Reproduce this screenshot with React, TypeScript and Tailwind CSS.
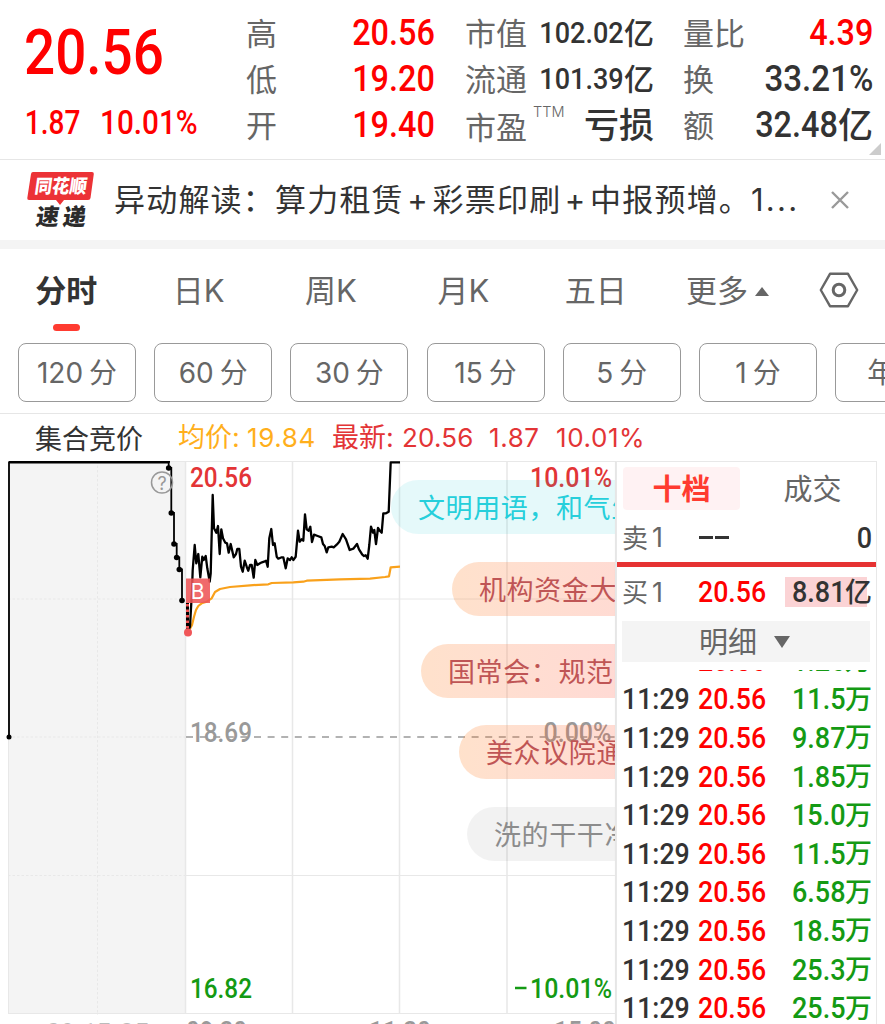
import React from 'react';
import clsx from 'clsx';

type Point = [number, number];

const TABS = ['分时', '日K', '周K', '月K', '五日'];

const PERIODS = [
  { count: '120', unit: '分' },
  { count: '60', unit: '分' },
  { count: '30', unit: '分' },
  { count: '15', unit: '分' },
  { count: '5', unit: '分' },
  { count: '1', unit: '分' },
];

const TRADES = [
  { time: '', price: '20.56', volume: '1.26' },
  { time: '11:29', price: '20.56', volume: '11.5' },
  { time: '11:29', price: '20.56', volume: '9.87' },
  { time: '11:29', price: '20.56', volume: '1.85' },
  { time: '11:29', price: '20.56', volume: '15.0' },
  { time: '11:29', price: '20.56', volume: '11.5' },
  { time: '11:29', price: '20.56', volume: '6.58' },
  { time: '11:29', price: '20.56', volume: '18.5' },
  { time: '11:29', price: '20.56', volume: '25.3' },
  { time: '11:29', price: '20.56', volume: '25.5' },
];

const HOT = 'bg-linear-to-r from-[#ff7814]/22 to-[#ff3c46]/22 text-[#bf5555]';

const COMMENTS = [
  { text: '文明用语，和气生', className: 'left-[391px] top-[19px] bg-[#00c3cd]/10 text-[#26cfdb]' },
  { text: '机构资金大', className: clsx('left-[452px] top-[101px]', HOT) },
  { text: '国常会：规范', className: clsx('left-[421px] top-[183px]', HOT) },
  { text: '美众议院通', className: clsx('left-[459px] top-[264px]', HOT) },
  { text: '洗的干干净', className: 'left-[467px] top-[346px] bg-black/5 text-[#8c8c8c]' },
];

// Samples are stored in thirds of a pixel from the plot origin
const PRICE: Point[] = [
  [145, 540], [150, 530], [156, 420], [158, 360], [164, 285], [169, 340], [175, 312], [181, 382], [187, 320],
  [191, 330], [197, 318], [202, 355], [209, 395], [212, 370], [218, 135], [222, 235], [229, 248], [234, 228],
  [239, 312], [244, 238], [249, 265], [256, 278], [261, 280], [266, 308], [272, 282], [281, 322], [288, 312],
  [292, 297], [298, 297], [303, 350], [308, 365], [314, 332], [320, 350], [325, 362], [330, 345], [335, 345],
  [341, 383], [346, 330], [352, 345], [360, 340], [366, 337], [372, 335], [378, 332], [383, 350], [388, 265],
  [394, 237], [399, 285], [404, 280], [410, 320], [415, 326], [425, 322], [430, 322], [437, 355], [443, 325],
  [450, 330], [455, 322], [460, 330], [467, 320], [474, 242], [479, 275], [485, 268], [490, 272], [495, 193],
  [500, 238], [506, 242], [511, 230], [516, 276], [522, 254], [533, 258], [544, 262], [549, 282], [554, 288],
  [560, 307], [565, 292], [575, 290], [581, 292], [590, 284], [598, 275], [608, 252], [618, 268], [629, 300],
  [640, 296], [651, 282], [657, 298], [667, 314], [672, 318], [677, 316], [683, 326], [688, 285], [693, 230],
  [699, 248], [703, 240], [708, 282], [714, 234], [720, 243], [725, 248], [730, 190], [738, 190], [746, 185],
  [752, 37], [780, 37],
];

const AVERAGE: Point[] = [
  [148, 540], [156, 525], [162, 500], [168, 480], [175, 468], [185, 460], [200, 455], [215, 445], [225, 426],
  [240, 417], [270, 411], [330, 406], [385, 403], [395, 399], [460, 397], [490, 395], [500, 392], [600, 388],
  [690, 386], [735, 381], [747, 379], [752, 352], [780, 350],
];

// Opening auction, drawn as steps
const AUCTION: Point[] = [
  [168.7, 468], [171.3, 513], [174, 544], [176.7, 557.5], [179.3, 569.5], [182, 600.5],
];

const toPoints = (points: Point[]) =>
  points.map(([x, y]) => `${(140 + x / 3).toFixed(1)},${(450 + y / 3).toFixed(1)}`).join(' ');

const Digits = ({ children, className, scale = 'scale-x-90' }: { children: React.ReactNode; className?: string; scale?: string }) => (
  <span className={clsx("inline-block font-['Roboto',sans-serif] font-medium leading-none whitespace-nowrap", scale, className)}>
    {children}
  </span>
);

const Quote = () => (
  <header className="relative flex h-[160px] border-b border-[#e6e6e6]">
    <div className="w-[246px] pl-[24px] pt-[21px] text-[#ff0000]">
      <Digits scale="scale-x-[0.87]" className="block origin-left text-[63px]">20.56</Digits>
      <div className="mt-[22px] flex">
        <Digits scale="scale-x-[0.85]" className="w-[76px] origin-left pl-px text-[33px]">1.87</Digits>
        <Digits className="origin-left text-[33px]">10.01%</Digits>
      </div>
    </div>

    <div className="flex w-[189px] flex-col pt-[10px] text-[31px] text-[#666]">
      {[['高', '20.56'], ['低', '19.20'], ['开', '19.40']].map(([label, value]) => (
        <div key={label} className="flex h-[46px] items-center justify-between leading-none">
          <span className="pb-[4px]">{label}</span>
          <Digits className="origin-right text-[36px] text-[#ff0000]">{value}</Digits>
        </div>
      ))}
    </div>

    <div className="ml-[30px] flex w-[189px] flex-col pt-[10px] text-[31px] text-[#666]">
      {[['市值', '102.02'], ['流通', '101.39']].map(([label, value]) => (
        <div key={label} className="flex h-[46px] items-center leading-none">
          <span className="flex-1 pb-[4px]">{label}</span>
          <Digits className="origin-right text-[30px] text-[#333]">{value}</Digits>
          <span className="pb-[5px] text-[30px] font-medium text-[#333]">亿</span>
        </div>
      ))}
      <div className="flex h-[46px] items-center leading-none">
        <span>市盈</span>
        <span className="mb-[26px] ml-[6px] flex-1 font-['Inter',sans-serif] text-[14.500px] font-light">TTM</span>
        <span className="pb-[5px] text-[35px] font-medium text-[#333]">亏损</span>
      </div>
    </div>

    <div className="ml-[29px] flex w-[190px] flex-col pt-[10px] text-[31px] text-[#666]">
      <div className="flex h-[46px] items-center justify-between leading-none">
        <span className="pb-[4px]">量比</span>
        <Digits className="origin-right text-[36px] text-[#ff0000]">4.39</Digits>
      </div>
      <div className="flex h-[46px] items-center justify-between leading-none">
        <span className="pb-[4px]">换</span>
        <Digits scale="scale-x-[0.92]" className="origin-right text-[36px] text-[#333]">33.21%</Digits>
      </div>
      <div className="flex h-[46px] items-center leading-none">
        <span className="flex-1 pb-[4px]">额</span>
        <Digits className="origin-right text-[36px] text-[#333]">32.48</Digits>
        <span className="pb-[6px] text-[35px] font-medium text-[#333]">亿</span>
      </div>
    </div>

    <svg className="absolute right-[4px] bottom-[4px] h-[12px] w-[12px]" viewBox="0 0 12 12">
      <path d="M12 0V12H0Z" fill="#ccc" />
    </svg>
  </header>
);

const NewsLogo = () => (
  <svg className="h-[58px] w-[68px]" viewBox="0 0 68 58" fontFamily="'Noto Sans CJK SC', sans-serif" fontWeight="900">
    <path d="M6 1H65Q67 1 66.8 3L63.500 27Q63.200 29 61 29H37L33 34L29 29H2Q0 29 .3 27L4 3Q4.300 1 6 1Z" fill="#ec3236" />
    <text transform="translate(7 22) skewX(-8)" fontSize="19" fill="#fff" textLength="52" lengthAdjust="spacingAndGlyphs">同花顺</text>
    <text transform="translate(8 53.500) skewX(-8)" fontSize="23" fill="#2b2b2b" textLength="50">速递</text>
  </svg>
);

const NewsBar = () => (
  <div className="flex h-[89px] items-center border-b-[9px] border-[#f4f4f4]">
    <div className="w-[114px] pl-[27px]">
      <NewsLogo />
    </div>
    <p className="w-[710px] pb-px font-['Inter','Noto_Sans_CJK_SC',sans-serif] text-[31px] leading-none tracking-[1.2px] whitespace-nowrap text-[#333]">
      异动解读：算力租赁<span className="px-[3.500px]">+</span>彩票印刷<span className="px-[3.500px]">+</span>中报预增。
      <span className="tracking-[2.200px]">1...</span>
    </p>
    <svg className="ml-[7px] h-[18px] w-[18px]" viewBox="0 0 18 18" stroke="#999" strokeWidth="2.400">
      <path d="M1 1L17 17M17 1L1 17" />
    </svg>
  </div>
);

const ChartTabs = () => (
  <nav className="flex h-[94px] pt-[22px] font-['Inter','Noto_Sans_CJK_SC',sans-serif] text-[31px] leading-[40px] text-[#666]">
    {TABS.map((tab, index) => (
      <div key={tab} className={clsx('flex w-[132.400px] flex-col items-center', index === 0 && 'font-bold text-[#333]')}>
        <span>{tab}</span>
        {index === 0 && <span className="mt-[13px] h-[7px] w-[27px] rounded-full bg-[#ff3b30]" />}
      </div>
    ))}
    <div className="flex h-[40px] w-[157px] items-center pl-[24px]">
      <span>更多</span>
      <svg className="ml-[7px] h-[9px] w-[14px]" viewBox="0 0 14 9">
        <path d="M7 0L14 9H0Z" fill="#666" />
      </svg>
    </div>
    <svg className="mt-px h-[36px] w-[40px]" viewBox="0 0 40 36" fill="none" stroke="#666" strokeWidth="2.400" strokeLinejoin="round">
      <path d="M11 1.800H29L38.200 18L29 34.200H11L1.800 18Z" />
      <circle cx="20" cy="18" r="5.800" strokeWidth="3" />
    </svg>
  </nav>
);

const Periods = () => (
  <div className="flex h-[71px] gap-[18.200px] overflow-hidden border-b border-[#e6e6e6] pl-[18px] text-[28px] leading-none text-[#666]">
    {PERIODS.map(({ count, unit }) => (
      <div key={count} className="flex h-[59px] w-[118px] shrink-0 items-center justify-center gap-[6px] rounded-[8px] border-[1.500px] border-[#999]">
        <span className="font-['Inter',sans-serif]">{count}</span>
        <span className="pb-[3px]">{unit}</span>
      </div>
    ))}
    <div className="flex h-[59px] w-[118px] shrink-0 items-center rounded-[8px] border-[1.500px] border-[#999] pb-[3px] pl-[31px]">年K</div>
  </div>
);

const Summary = () => (
  <div className="flex h-[47px] items-center pl-[35px] font-['Inter','Noto_Sans_CJK_SC',sans-serif] text-[27px] leading-none text-[#e33436]">
    <span className="w-[143px] pt-[4px] text-[#333]">集合竞价</span>
    <span className="w-[69px] text-[#ffaf1c]">均价:</span>
    <span className="w-[85px] text-[26px] tracking-[0.6px] text-[#ffaf1c]">19.84</span>
    <span className="w-[70px]">最新:</span>
    <span className="w-[87px] text-[26px] tracking-[0.2px]">20.56</span>
    <span className="w-[67px] text-[26px] tracking-[0.6px]">1.87</span>
    <span className="text-[26px] tracking-[0.6px]">10.01%</span>
  </div>
);

const TimeChart = () => (
  <div className="relative h-[563px] w-[617px] shrink-0 overflow-hidden">
    <svg className="block h-[563px] w-[617px]" viewBox="0 461 617 563" fill="none">
      <rect x="8" y="461" width="177" height="552" fill="#f4f4f4" />

      {/* Grid */}
      <g stroke="#e8e8e8">
        <path d="M8 461.500H616M8 1013.500H616M8.500 461V1013" />
        <path d="M185.500 461V1013M292.500 461V1013M399.500 461V1013M507 461V1013" strokeWidth="1.500" />
        <path d="M185 599H616M185 875.500H616" />
        <path d="M8 599H185M8 737H185M8 875.500H185M97.500 461V1015" strokeDasharray="2.500 2" />
      </g>
      <path d="M615.900 461V1024" stroke="#e6e6e6" strokeWidth="2" />
      <path d="M186 737H616" stroke="#999" strokeWidth="1.500" strokeDasharray="7 6.600" />

      {/* Opening auction */}
      <path
        d="M9 737V462.500H168.700V468H171.300V513H174V544H176.700V557.500H179.300V569.500H182V600.500"
        stroke="#000"
        strokeWidth="1.800"
      />
      <path d="M9 461.500H170" stroke="#000" strokeWidth="2.500" />
      {AUCTION.map(([x, y]) => (
        <circle key={x} cx={x} cy={y} r="2.800" fill="#000" />
      ))}
      <circle cx="9" cy="737" r="2.500" fill="#000" />
      <circle cx="162" cy="482.500" r="10.500" stroke="#999" strokeWidth="1.500" />
      <text x="162" y="489.500" textAnchor="middle" fontFamily="Inter, sans-serif" fontSize="18" fill="#999">?</text>

      {/* Average and price */}
      <polyline points={toPoints(AVERAGE)} stroke="#f9a11b" strokeWidth="2.200" strokeLinejoin="round" />
      <polyline points={toPoints(PRICE)} stroke="#000" strokeWidth="2.300" strokeLinejoin="round" />
      <path d="M187.500 603V632" stroke="#000" strokeWidth="3" />
      <path d="M187.500 604V632" stroke="#f05050" strokeWidth="3" strokeDasharray="2.500 3" />
      <circle cx="188" cy="632.500" r="4" fill="#f05658" />
      <rect x="186" y="578.500" width="24" height="24.500" fill="#ee5558" fillOpacity=".88" />
      <text x="197.500" y="599" textAnchor="middle" fontFamily="Inter, sans-serif" fontSize="21" fill="#fff">B</text>

      {/* Axis labels */}
      <g fontFamily="Roboto, sans-serif" fontSize="27" fontWeight="500">
        <text x="190" y="486.500" fill="#e33436" textLength="62" lengthAdjust="spacingAndGlyphs">20.56</text>
        <text x="530" y="486.500" fill="#e33436" textLength="82" lengthAdjust="spacingAndGlyphs">10.01%</text>
        <text x="190" y="742" fill="#999" textLength="62" lengthAdjust="spacingAndGlyphs">18.69</text>
        <text x="543.500" y="742" fill="#999" textLength="68" lengthAdjust="spacingAndGlyphs">0.00%</text>
        <text x="190" y="997.500" fill="#149a14" textLength="62" lengthAdjust="spacingAndGlyphs">16.82</text>
        <path d="M515 988H526.500" stroke="#149a14" strokeWidth="2.500" />
        <text x="530" y="997.500" fill="#149a14" textLength="82" lengthAdjust="spacingAndGlyphs">10.01%</text>
        <text x="46" y="1042.500" fill="#bbb" textLength="103" lengthAdjust="spacingAndGlyphs">09:15-25</text>
        <text x="186" y="1040.500" fill="#999" textLength="61" lengthAdjust="spacingAndGlyphs">09:30</text>
        <text x="369" y="1040.500" fill="#999" textLength="62" lengthAdjust="spacingAndGlyphs">11:30</text>
        <text x="554" y="1040.500" fill="#999" textLength="62" lengthAdjust="spacingAndGlyphs">15:00</text>
      </g>
    </svg>

    {/* Floating comments */}
    <div className="absolute inset-y-0 left-0 w-[615px] overflow-hidden">
      {COMMENTS.map((comment) => (
        <div
          key={comment.text}
          className={clsx('absolute flex h-[54px] w-[300px] items-center rounded-l-full pb-px pl-[27px] text-[27px] leading-none tracking-[0.6px] whitespace-nowrap', comment.className)}
        >
          {comment.text}
        </div>
      ))}
    </div>
  </div>
);

const OrderBook = () => (
  <aside className="flex h-[563px] w-[260px] shrink-0 flex-col border-t border-r border-[#e8e8e8] text-[#666]">
    <div className="flex h-[53px] pl-[6px] pt-[5px] text-[29px] leading-none">
      <div className="flex h-[43px] w-[117px] items-center justify-center rounded-[4px] bg-[#fff2f3] pb-[2px] font-bold text-[#ff3b30]">十档</div>
      <div className="flex h-[43px] flex-1 items-center justify-center pb-[2px] pl-[9px]">成交</div>
    </div>

    <div className="flex h-[47px] items-center pb-[2px] pl-[5px] pr-[4px] leading-none">
      <span className="w-[30px] pb-[2px] text-[26px]">卖</span>
      <span className="w-[47px] font-['Inter',sans-serif] text-[27px]">1</span>
      <span className="mr-[2px] h-[2.500px] w-[14px] bg-[#333]" />
      <span className="h-[2.500px] w-[14px] bg-[#333]" />
      <Digits className="ml-auto origin-right text-[30px] text-[#333]">0</Digits>
    </div>
    <div className="h-[5px] bg-[#e63232]" />
    <div className="flex h-[50px] items-center pl-[5px] pr-[9px] leading-none">
      <span className="w-[30px] pb-[3px] text-[26px]">买</span>
      <span className="w-[46px] font-['Inter',sans-serif] text-[27px]">1</span>
      <Digits scale="scale-x-[0.89]" className="origin-left text-[30px] text-[#ff0000]">20.56</Digits>
      <span className="ml-auto flex h-[30px] w-[82px] items-center justify-end bg-[#fbd3d5] text-[27px] font-medium text-[#333]">
        <Digits className="origin-right text-[30px]">8.81</Digits>
        <span className="-mr-[5px] pb-[4px]">亿</span>
      </span>
    </div>

    <div className="ml-[5px] mt-[4px] flex h-[41px] w-[248px] items-center justify-center bg-[#f4f4f4] pr-[3px] pb-[2px] text-[29px] leading-none">
      <span>明细</span>
      <svg className="mt-[2px] ml-[17px] h-[12px] w-[16px]" viewBox="0 0 16 12">
        <path d="M0 0H16L8 12Z" fill="#666" />
      </svg>
    </div>

    <div className="mt-[8px] flex-1 overflow-hidden">
      <div className="-mt-[28.500px]">
        {TRADES.map((trade, index) => (
          <div key={index} className="flex h-[38.600px] items-center pl-[5px] pr-[4px] leading-none">
            <Digits scale="scale-x-[0.89]" className="w-[76px] shrink-0 origin-left text-[30px] text-[#333]">{trade.time}</Digits>
            <Digits scale="scale-x-[0.89]" className="origin-left text-[30px] text-[#ff0000]">{trade.price}</Digits>
            <Digits className="ml-auto origin-right text-[30px] text-[#149a14]">{trade.volume}</Digits>
            <span className="pb-[4px] text-[27px] font-medium text-[#149a14]">万</span>
          </div>
        ))}
      </div>
    </div>
  </aside>
);

const App = () => {
  return (
    <div className="h-[1024px] w-[885px] overflow-hidden bg-white font-['Noto_Sans_CJK_SC',sans-serif]">
      <Quote />
      <NewsBar />
      <ChartTabs />
      <Periods />
      <Summary />
      <main className="flex">
        <TimeChart />
        <OrderBook />
      </main>
    </div>
  );
};

export default App;
